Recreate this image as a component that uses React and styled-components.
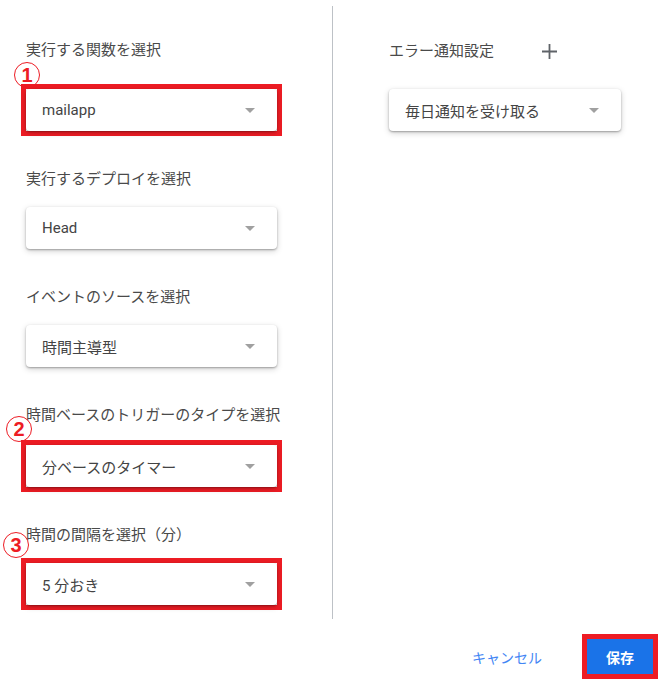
import React from 'react';
import styled, { createGlobalStyle } from 'styled-components';

const GlobalStyle = createGlobalStyle`
  html, body {
    margin: 0;
    padding: 0;
    background: #fff;
  }
  body {
    font-family: Roboto, "Noto Sans CJK JP", "Noto Sans", sans-serif;
    color: #444;
  }
`;

const RED = '#ed1c24';

const Page = styled.div`
  width: 672px;
  height: 692px;
  display: flex;
  flex-direction: column;
`;

const Body = styled.div`
  margin-top: 6px;
  height: 613px;
  display: flex;
`;

const LeftCol = styled.div`
  width: 306px;
  border-right: 1px solid #bdc1c6;
  padding: 34px 0 0 26px;
  display: flex;
  flex-direction: column;
  gap: 38px;
`;

const RightCol = styled.div`
  flex: 1;
  padding: 35px 0 0 56px;
  display: flex;
  flex-direction: column;
  gap: 28px;
`;

const Field = styled.div`
  position: relative;
  display: flex;
  flex-direction: column;
  align-items: flex-start;
  gap: ${(p) => p.$gap}px;
`;

const Label = styled.div`
  font-size: 15px;
  line-height: 20px;
  color: #4a4a4a;
  white-space: nowrap;
`;

const HeaderRow = styled.div`
  display: flex;
  align-items: center;
  gap: 48px;
`;

// red annotation frame drawn over the control, square corners
const Marked = styled.div`
  margin: -5px;
  border: 5px solid ${RED};
  display: flex;
`;

const SelectBox = styled.div`
  width: ${(p) => p.$width}px;
  height: 42px;
  box-sizing: border-box;
  padding: 0 22px 0 16px;
  display: flex;
  align-items: center;
  justify-content: space-between;
  background: #fff;
  border-radius: 4px;
  box-shadow: 0 1px 2px rgba(0, 0, 0, 0.3), 0 2px 6px rgba(0, 0, 0, 0.18);
  font-size: 15px;
  color: #444;
`;

const Caret = styled.span`
  width: 0;
  height: 0;
  border-left: 5px solid transparent;
  border-right: 5px solid transparent;
  border-top: 5px solid #a0a0a0;
`;

const Badge = styled.span`
  position: absolute;
  z-index: 1;
  left: ${(p) => p.$x}px;
  top: ${(p) => p.$y}px;
  width: 26px;
  height: 26px;
  box-sizing: border-box;
  border: 1px solid ${RED};
  border-radius: 50%;
  display: flex;
  align-items: center;
  justify-content: center;
  color: ${RED};
  font-family: "Liberation Sans", Arial, sans-serif;
  font-weight: bold;
  font-size: 20px;
  line-height: 1;
`;

const Footer = styled.div`
  display: flex;
  justify-content: flex-end;
  align-items: center;
  gap: 45px;
  padding: 20px 19px 0 0;
`;

const CancelButton = styled.button`
  border: none;
  background: none;
  padding: 0;
  font-family: inherit;
  font-size: 14px;
  color: #4285f4;
  cursor: pointer;
`;

const SaveButton = styled.button`
  width: 66px;
  height: 35px;
  border: none;
  background: #1a73e8;
  color: #fff;
  font-family: inherit;
  font-size: 14px;
  font-weight: bold;
  outline: 5px solid ${RED};
  cursor: pointer;
`;

function Select({ value, width = 251, marked }) {
  const box = (
    <SelectBox $width={width}>
      <span>{value}</span>
      <Caret />
    </SelectBox>
  );
  return marked ? <Marked>{box}</Marked> : box;
}

function PlusIcon() {
  return (
    <svg width="15" height="15" viewBox="0 0 15 15">
      <path d="M7.5 0v15M0 7.5h15" stroke="#5f6368" strokeWidth="1.8" />
    </svg>
  );
}

const fields = [
  { label: '実行する関数を選択', value: 'mailapp', gap: 29, badge: { n: '1', x: -12, y: 22 } },
  { label: '実行するデプロイを選択', value: 'Head', gap: 18 },
  { label: 'イベントのソースを選択', value: '時間主導型', gap: 18 },
  { label: '時間ベースのトリガーのタイプを選択', value: '分ベースのタイマー', gap: 20, badge: { n: '2', x: -20, y: 11 } },
  { label: '時間の間隔を選択（分）', value: '5 分おき', gap: 18, badge: { n: '3', x: -23, y: 7 } },
];

export default function App() {
  return (
    <Page>
      <GlobalStyle />
      <Body>
        <LeftCol>
          {fields.map((f) => (
            <Field key={f.label} $gap={f.gap}>
              <Label>{f.label}</Label>
              {f.badge && <Badge $x={f.badge.x} $y={f.badge.y}>{f.badge.n}</Badge>}
              <Select value={f.value} marked={!!f.badge} />
            </Field>
          ))}
        </LeftCol>
        <RightCol>
          <HeaderRow>
            <Label>エラー通知設定</Label>
            <PlusIcon />
          </HeaderRow>
          <Select value="毎日通知を受け取る" width={232} />
        </RightCol>
      </Body>
      <Footer>
        <CancelButton>キャンセル</CancelButton>
        <SaveButton>保存</SaveButton>
      </Footer>
    </Page>
  );
}
